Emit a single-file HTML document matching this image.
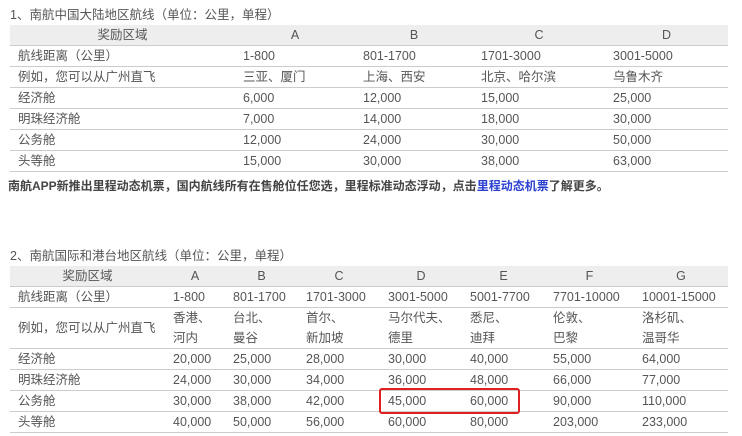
<!DOCTYPE html>
<html><head><meta charset="utf-8"><style>
body{margin:0;background:#fff;width:742px;height:436px;overflow:hidden;font-family:"Liberation Sans","Noto Sans CJK SC",sans-serif;font-size:12.5px;color:#555;position:relative}
.t{position:absolute;left:10px;white-space:nowrap}
table{position:absolute;left:10px;border-collapse:collapse;table-layout:fixed;width:718px}
td{padding:0 0 0 8px;border-bottom:1px solid #ccc;height:20px;line-height:20px;white-space:nowrap;overflow:hidden}
tr.h td{background:#eee;text-align:center;padding:0;height:20px}
td.two{line-height:20px;height:40px}
b{color:#444}
a{color:#2a3fd1;text-decoration:none}
</style></head><body>
<div class="t" style="top:6px;line-height:18px">1、南航中国大陆地区航线（单位：公里，单程）</div>
<table style="top:25px">
<colgroup><col style="width:225px"><col style="width:120px"><col style="width:118px"><col style="width:132px"><col style="width:123px"></colgroup>
<tr class="h"><td>奖励区域</td><td>A</td><td>B</td><td>C</td><td>D</td></tr>
<tr><td>航线距离（公里）</td><td>1-800</td><td>801-1700</td><td>1701-3000</td><td>3001-5000</td></tr>
<tr><td>例如，您可以从广州直飞</td><td>三亚、厦门</td><td>上海、西安</td><td>北京、哈尔滨</td><td>乌鲁木齐</td></tr>
<tr><td>经济舱</td><td>6,000</td><td>12,000</td><td>15,000</td><td>25,000</td></tr>
<tr><td>明珠经济舱</td><td>7,000</td><td>14,000</td><td>18,000</td><td>30,000</td></tr>
<tr><td>公务舱</td><td>12,000</td><td>24,000</td><td>30,000</td><td>50,000</td></tr>
<tr><td>头等舱</td><td>15,000</td><td>30,000</td><td>38,000</td><td>63,000</td></tr>
</table>
<div class="t" style="top:177px;line-height:18px;left:8px;font-size:12px"><b>南航APP新推出里程动态机票，国内航线所有在售舱位任您选，里程标准动态浮动，点击<a>里程动态机票</a>了解更多。</b></div>
<div class="t" style="top:247px;line-height:18px">2、南航国际和港台地区航线（单位：公里，单程）</div>
<table style="top:266px">
<colgroup><col style="width:155px"><col style="width:60px"><col style="width:73px"><col style="width:82px"><col style="width:82px"><col style="width:83px"><col style="width:89px"><col style="width:94px"></colgroup>
<tr class="h"><td>奖励区域</td><td>A</td><td>B</td><td>C</td><td>D</td><td>E</td><td>F</td><td>G</td></tr>
<tr><td>航线距离（公里）</td><td>1-800</td><td>801-1700</td><td>1701-3000</td><td>3001-5000</td><td>5001-7700</td><td>7701-10000</td><td>10001-15000</td></tr>
<tr><td class="two">例如，您可以从广州直飞</td><td class="two">香港、<br>河内</td><td class="two">台北、<br>曼谷</td><td class="two">首尔、<br>新加坡</td><td class="two">马尔代夫、<br>德里</td><td class="two">悉尼、<br>迪拜</td><td class="two">伦敦、<br>巴黎</td><td class="two">洛杉矶、<br>温哥华</td></tr>
<tr><td>经济舱</td><td>20,000</td><td>25,000</td><td>28,000</td><td>30,000</td><td>40,000</td><td>55,000</td><td>64,000</td></tr>
<tr><td>明珠经济舱</td><td>24,000</td><td>30,000</td><td>34,000</td><td>36,000</td><td>48,000</td><td>66,000</td><td>77,000</td></tr>
<tr><td>公务舱</td><td>30,000</td><td>38,000</td><td>42,000</td><td>45,000</td><td>60,000</td><td>90,000</td><td>110,000</td></tr>
<tr><td>头等舱</td><td>40,000</td><td>50,000</td><td>56,000</td><td>60,000</td><td>80,000</td><td>203,000</td><td>233,000</td></tr>
</table>
<div style="position:absolute;left:379px;top:388px;width:137px;height:22px;border:2px solid #e02020;border-radius:3px"></div>
</body></html>
